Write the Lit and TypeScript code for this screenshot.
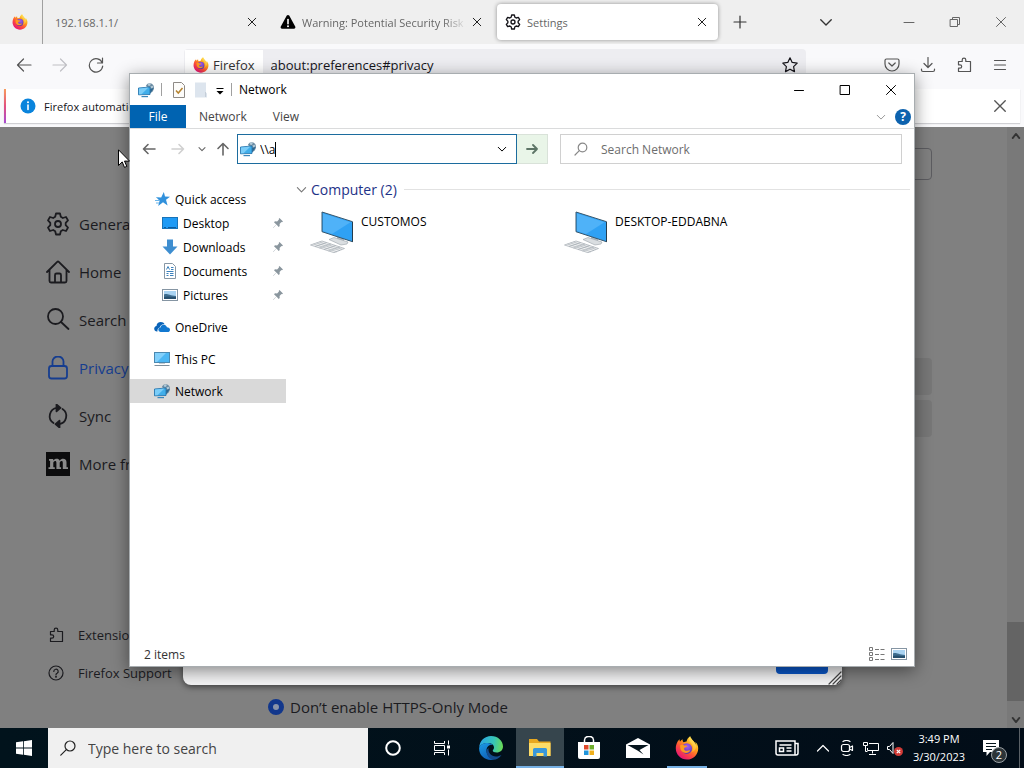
import { LitElement, html, css, nothing, TemplateResult } from 'lit';
import { customElement, property, state } from 'lit/decorators.js';
import { classMap } from 'lit/directives/class-map.js';

interface NavItem {
  label: string;
  icon: TemplateResult;
  active?: boolean;
  pinned?: boolean;
}

/* ---------- shared icons ---------- */

const firefoxIcon = html`
  <svg class="firefox" viewBox="0 0 24 24" aria-hidden="true">
    <defs>
      <linearGradient id="fx-body" x1="0.85" y1="0.05" x2="0.2" y2="0.95">
        <stop offset="0" stop-color="#fff044" />
        <stop offset="0.35" stop-color="#ffa318" />
        <stop offset="0.65" stop-color="#ff4f3a" />
        <stop offset="1" stop-color="#e4107a" />
      </linearGradient>
      <radialGradient id="fx-globe" cx="0.55" cy="0.3" r="0.75">
        <stop offset="0" stop-color="#a45cf0" />
        <stop offset="1" stop-color="#5037a8" />
      </radialGradient>
      <linearGradient id="fx-tail" x1="0.7" y1="0" x2="0.3" y2="1">
        <stop offset="0" stop-color="#fff36b" />
        <stop offset="1" stop-color="#ff9a1c" />
      </linearGradient>
    </defs>
    <path fill="url(#fx-body)" d="M22.6 9.2c-.5-1.300-1.600-2.700-2.400-3.100.7 1.300 1 2.600 1.200 3.500-1.300-3.300-3.600-4.600-5.500-7.500-.6-.9-.7-1.500-.7-1.900-2.300 1.400-3.400 3.600-3.600 5.300-1.100.1-2 .4-2.900.8-.9-.6-1.200-1.700-1.100-3-1 .5-1.900 1.400-2.500 2.200-.5-.4-.5-1.500-.4-2.300C3.200 4.200.8 7.600.8 12.400.8 18.500 5.900 23.500 12 23.500s11.200-4.900 11.200-11.100c0-1.100-.2-2.300-.6-3.200z" />
    <circle cx="11.800" cy="12.600" r="5.300" fill="url(#fx-globe)" />
    <path fill="#ff9a1f" d="M5.200 9.200c1.300-.8 3.100-.6 4.200.2 1.300 0 2.600.1 2.900.6-.2.800-1.400 1.300-2.300 1.600-.8.300-1 1-.8 1.700.3 1.200 1.500 1.700 2.900 1.500 1.400-.2 2.200-.9 3.100-.5-.7 1.700-2.500 2.600-4.200 2.600-3.700 0-6.200-2.600-5.800-7.700z" />
    <path fill="url(#fx-tail)" d="M15.200.2c-1.700 1.600-2 4 .3 6.300 2.200 2.200 3 4.600 2.100 7.200-.4 1.300-1.300 2.400-2.200 3 3.300-.6 5.600-3.300 5.900-6.400-1.200-3.800-3.500-5.200-5.400-8.200-.6-.9-.7-1.500-.7-1.900z" />
  </svg>
`;

const gearIcon = html`
  <svg viewBox="0 0 24 24" class="line gear" aria-hidden="true">
    <circle cx="12" cy="12" r="3" />
    <path d="M10 1.500h4l.8 3.300 2 1.200 3.200-1 2 3.400-2.300 2.400v2.400l2.300 2.400-2 3.400-3.200-1-2 1.200-.8 3.300h-4l-.8-3.300-2-1.200-3.200 1-2-3.400 2.300-2.400v-2.400L2 8.400 4 5l3.200 1 2-1.200z" />
  </svg>
`;

const closeIcon = html`
  <svg viewBox="0 0 12 12" class="line" aria-hidden="true"><path d="M1.500 1.500l9 9M10.500 1.500l-9 9" /></svg>
`;

const puzzleIcon = html`
  <svg viewBox="0 0 16 16" class="line" aria-hidden="true">
    <path d="M2.500 4.500h3.700V3a1.800 1.800 0 0 1 3.600 0v1.500h4.700v10h-12v-3.300H4a1.700 1.700 0 0 0 0-3.400H2.500z" />
  </svg>
`;

const networkIcon = html`
  <svg viewBox="0 0 16 16" aria-hidden="true">
    <path d="M8 3.500a4.200 4.200 0 0 1 7.500 0c.8 2 .5 4.500-.8 6l-2.700 2z" fill="#6b8ca3" />
    <path d="M9.500 2.500l2.300-1.300 1 1.500-1.800 1.500zM12.500 4.500l2.300-.8.300 1.800-2 1z" fill="#b4cbd9" />
    <path d="M15.800 6l-3.600 5.500V7z" fill="#2d668f" />
    <path d="M.5 6l11.500-1v7.500L.5 12.800z" fill="#41aeea" stroke="#1f6fa8" stroke-width=".8" />
    <path d="M1 6.400l9.500-.8-7 6.700H1z" fill="#7bcdf8" />
    <path d="M3.500 14h6.500v1.200H3.500z" fill="#3a87bb" />
  </svg>
`;

const pictureIcon = html`
  <svg viewBox="0 0 16 16" aria-hidden="true">
    <rect x=".5" y="2.500" width="15" height="11" fill="#fff" stroke="#8595a3" />
    <rect x="2" y="4" width="12" height="8" fill="#a9d3f2" />
    <path d="M2 7.500c3-1.500 5 1 12 1.500v3H2z" fill="#3e6d8f" />
    <path d="M2 10c4-1.500 7 .5 12 0v2H2z" fill="#27506f" />
  </svg>
`;

const chevronDown = html`
  <svg viewBox="0 0 12 12" class="line" aria-hidden="true"><path d="M1.500 4l4.500 4.500L10.500 4" /></svg>
`;

const base = css`
  * {
    box-sizing: border-box;
  }

  button {
    display: flex;
    align-items: center;
    justify-content: center;
    flex: none;
    margin: 0;
    padding: 0;
    border: 0;
    background: none;
    color: inherit;
    font: inherit;
  }

  input {
    min-width: 0;
    margin: 0;
    padding: 0;
    border: 0;
    outline: 0;
    background: none;
    color: inherit;
    font: inherit;
  }

  a {
    color: inherit;
    text-decoration: none;
  }

  svg {
    display: block;
    flex: none;
    width: 16px;
    height: 16px;
  }

  .line {
    fill: none;
    stroke: currentColor;
    stroke-width: 1.2;
    stroke-linejoin: round;
    stroke-linecap: round;
  }
`;

/* ---------- browser ---------- */

const warningIcon = html`
  <svg viewBox="0 0 16 16" aria-hidden="true">
    <path d="M6.800 1.600a1.400 1.400 0 0 1 2.400 0l6 11a1.400 1.400 0 0 1-1.200 2.100H2a1.400 1.400 0 0 1-1.200-2.100z" fill="#000" />
    <path d="M8 5.500v4.200" stroke="#fff" stroke-width="1.600" stroke-linecap="round" />
    <circle cx="8" cy="12.200" r="1" fill="#fff" />
  </svg>
`;

const homeIcon = html`
  <svg viewBox="0 0 24 24" class="line" aria-hidden="true">
    <path d="M1 12L11.200 1.800a1.200 1.200 0 0 1 1.600 0L23 12M3.500 10v11a1.500 1.500 0 0 0 1.500 1.500h14a1.500 1.500 0 0 0 1.500-1.500V10M9 22v-7a1.500 1.500 0 0 1 1.500-1.500h3A1.500 1.500 0 0 1 15 15v7" />
  </svg>
`;

const searchIcon = html`
  <svg viewBox="0 0 24 24" class="line" aria-hidden="true">
    <circle cx="9.500" cy="8.500" r="7.500" /><path d="M15 14l7.500 7" />
  </svg>
`;

const lockIcon = html`
  <svg viewBox="0 0 24 24" class="line" aria-hidden="true">
    <rect x="3" y="10" width="18" height="12.500" rx="2.500" />
    <path d="M6.500 10V5.500a5.500 5 0 0 1 11 0V10" />
  </svg>
`;

const syncIcon = html`
  <svg viewBox="0 0 24 24" class="line" aria-hidden="true">
    <path d="M7.500 19A8.300 8.300 0 0 1 11 3.800M16.500 5A8.300 8.300 0 0 1 13 20.200" />
    <path d="M10.500.5v6.800l4-3.400zM13.500 23.500v-6.800l-4 3.400z" fill="currentColor" />
  </svg>
`;

const moreIcon = html`
  <svg viewBox="0 0 24 24" aria-hidden="true">
    <rect width="24" height="24" fill="#0c0c0d" />
    <path d="M3 7h4.200v1.500C8.300 7.200 9.300 6.700 10.700 6.700c1.400 0 2.500.6 3 2 .9-1.400 2-2 3.500-2 2.200 0 3.300 1.400 3.300 3.600v5h1.500V17h-5.200v-6c0-1.300-.4-1.900-1.300-1.900-1.100 0-1.800.9-1.800 2.300v3.900h1.400V17h-4.700v-6c0-1.300-.4-1.900-1.300-1.900-1.100 0-1.800.9-1.800 2.300v3.900h1.500V17H2.500v-1.700h1.600V8.700H3z" fill="#8a8a8a" />
  </svg>
`;

const helpIcon = html`
  <svg viewBox="0 0 16 16" class="line" aria-hidden="true">
    <circle cx="8" cy="8" r="7" />
    <path d="M5.800 6.400a2.200 2.200 0 1 1 3.300 1.900c-.8.400-1.100.8-1.100 1.500" />
    <circle cx="8" cy="11.800" r=".4" fill="currentColor" />
  </svg>
`;

@customElement('browser-window')
export class BrowserWindow extends LitElement {
  static styles = [
    base,
    css`
      :host {
        display: flex;
        flex-direction: column;
        flex: 1;
        min-height: 0;
        position: relative;
        overflow: hidden;
        color: #15141a;
      }

      .tabs {
        display: flex;
        align-items: center;
        height: 44px;
        background: #efefef;
        color: #333;
        font-size: 11px;
      }

      .pinned {
        width: 43px;
        height: 44px;
        margin-right: 4px;
        padding-right: 2px;
        border-right: 1px solid #a0a0a0;
      }

      .tab {
        display: flex;
        align-items: center;
        gap: 6px;
        width: 221px;
        height: 36px;
        margin-right: 4px;
        padding: 0 6px 0 8px;
        border-radius: 4px;
        color: #666;
      }

      .tab svg.gear {
        color: #15141a;
        stroke-width: 2;
      }

      .tab.selected {
        background: #fff;
        box-shadow: 0 0 4px rgba(0, 0, 0, 0.4);
      }

      .tab-title {
        flex: 1;
        overflow: hidden;
        white-space: nowrap;
      }

      .tab-title.fade {
        mask-image: linear-gradient(to left, transparent, #000 24px);
      }

      .tab-close {
        width: 20px;
        height: 20px;
        margin-left: -6px;
        color: #222;
      }

      .tab-close svg {
        width: 10px;
        height: 10px;
      }

      .new-tab {
        width: 36px;
        height: 36px;
      }

      .new-tab svg {
        width: 14px;
        height: 14px;
      }

      .tab-list {
        width: 36px;
        height: 36px;
        margin-left: auto;
        margin-right: 42px;
      }

      .tab-list svg {
        width: 14px;
        height: 14px;
      }

      .caption {
        width: 46px;
        height: 36px;
        color: #666;
      }

      .caption svg {
        width: 12px;
        height: 12px;
      }

      .caption .line {
        stroke-width: 1;
      }

      .toolbar {
        display: flex;
        align-items: center;
        height: 43px;
        padding: 0 6px 2px;
        background: #f9f9fb;
        color: #555;
      }

      .tool {
        width: 36px;
        height: 36px;
      }

      .tool[disabled] {
        color: #c0c0c4;
      }

      .urlbar {
        display: flex;
        align-items: center;
        flex: 1;
        height: 32px;
        margin: 0 68px 0 70px;
        padding: 1px;
        border-radius: 4px;
        background: #ededf1;
        color: #15141a;
        font-size: 13px;
      }

      .identity {
        display: flex;
        align-items: center;
        gap: 4px;
        height: 30px;
        padding: 0 8px;
        background: #fff;
        color: #333;
      }

      .urlbar input {
        flex: 1;
        padding-left: 8px;
      }

      .urlbar button {
        width: 30px;
        height: 30px;
      }

      .notice {
        display: flex;
        align-items: center;
        height: 40px;
        padding: 2px 4px 4px;
        background: #f9f9fb;
        font-size: 11px;
      }

      .notice-body {
        display: flex;
        align-items: center;
        gap: 8px;
        flex: 1;
        height: 34px;
        padding: 0 8px 0 14px;
        border-style: solid;
        border-width: 0 0 0 2px;
        border-image: linear-gradient(#f9a05a, #e2517f, #a34bd8) 1;
        background: #fff;
        box-shadow: 0 1px 1px #d0d0d4;
      }

      .notice-text {
        flex: 1;
        overflow: hidden;
        white-space: nowrap;
      }

      .notice button {
        width: 24px;
        height: 24px;
        color: #555;
      }

      .notice button svg {
        width: 14px;
        height: 14px;
      }

      .page {
        display: flex;
        flex: 1;
        min-height: 0;
        background: #808080;
      }

      .categories {
        display: flex;
        flex-direction: column;
        width: 248px;
        padding: 73px 0 36px 46px;
        font-size: 15px;
        white-space: nowrap;
      }

      .category {
        display: flex;
        align-items: center;
        gap: 9px;
        height: 48px;
        color: #1b1b1f;
      }

      .category.active {
        color: #163d8f;
      }

      .category svg {
        width: 24px;
        height: 24px;
      }

      .category .line {
        stroke-width: 1.8;
      }

      .spacer {
        flex: 1;
      }

      .small {
        gap: 14px;
        height: 38px;
        padding-left: 2px;
        font-size: 13px;
      }

      .small svg {
        width: 16px;
        height: 16px;
      }

      .small .line {
        stroke-width: 1.2;
      }

      .prefs {
        display: flex;
        flex-direction: column;
        flex: 1;
        max-width: 684px;
        padding: 21px 0 10px 20px;
      }

      .find {
        width: 280px;
        height: 32px;
        margin-left: auto;
        margin-bottom: 178px;
        border: 1px solid #5c5c60;
        border-radius: 4px;
      }

      .pref-button {
        width: 150px;
        height: 37px;
        margin: 0 0 5px auto;
        border-radius: 4px;
        background: #777;
        color: #1b1b1f;
        font-size: 13px;
      }

      .radio-row {
        display: flex;
        align-items: center;
        gap: 6px;
        margin-top: auto;
        font-size: 15px;
        line-height: 22px;
        color: #1b1b1f;
      }

      .radio-row input {
        appearance: none;
        width: 16px;
        height: 16px;
        border: 5px solid #12378c;
        border-radius: 50%;
        background: #8a93a8;
      }

      .scrollbar {
        display: flex;
        flex-direction: column;
        align-items: center;
        width: 17px;
        margin-left: auto;
        padding: 4px 0 3px;
        background: #797979;
        color: #333;
      }

      .scrollbar svg {
        width: 10px;
        height: 10px;
      }

      .scrollbar .line {
        stroke-width: 2.2;
      }

      .thumb {
        width: 17px;
        height: 79px;
        margin: auto 0 14px;
        background: #646464;
      }

      /* sub-dialog floating over the dimmed page */
      .dialog {
        position: absolute;
        left: 183px;
        bottom: 43px;
        display: flex;
        align-items: flex-end;
        width: 659px;
        height: 400px;
        border-radius: 8px;
        background: #f4f4f5;
        box-shadow: 0 2px 6px rgba(0, 0, 0, 0.5);
      }

      .save {
        width: 52px;
        height: 32px;
        margin: 0 0 11px auto;
        border-radius: 4px;
        background: #0a57c9;
        color: #fff;
        font-size: 13px;
      }

      .grip {
        width: 14px;
        height: 14px;
        color: #444;
      }
    `,
  ];

  @property({ type: String })
  url = 'about:preferences#privacy';

  private categories: NavItem[] = [
    { label: 'General', icon: gearIcon },
    { label: 'Home', icon: homeIcon },
    { label: 'Search', icon: searchIcon },
    { label: 'Privacy & Security', icon: lockIcon, active: true },
    { label: 'Sync', icon: syncIcon },
    { label: 'More from Mozilla', icon: moreIcon },
  ];

  private renderTabs() {
    return html`
      <div class="tabs">
        <button class="pinned" aria-label="Firefox">${firefoxIcon}</button>
        <div class="tab">
          <span class="tab-title">192.168.1.1/</span>
          <button class="tab-close" aria-label="Close tab">${closeIcon}</button>
        </div>
        <div class="tab">
          ${warningIcon}
          <span class="tab-title fade">Warning: Potential Security Risk Ahead</span>
          <button class="tab-close" aria-label="Close tab">${closeIcon}</button>
        </div>
        <div class="tab selected">
          ${gearIcon}
          <span class="tab-title">Settings</span>
          <button class="tab-close" aria-label="Close tab">${closeIcon}</button>
        </div>
        <button class="new-tab" aria-label="New tab">
          <svg viewBox="0 0 14 14" class="line"><path d="M7 1v12M1 7h12" /></svg>
        </button>
        <button class="tab-list" aria-label="List all tabs">${chevronDown}</button>
        <button class="caption" aria-label="Minimize">
          <svg viewBox="0 0 12 12" class="line"><path d="M1 6.500h10" /></svg>
        </button>
        <button class="caption" aria-label="Restore">
          <svg viewBox="0 0 12 12" class="line"><path d="M1.500 3.500h7v7h-7zM3.500 3.500v-2h7v7h-2" /></svg>
        </button>
        <button class="caption" aria-label="Close">${closeIcon}</button>
      </div>
    `;
  }

  private renderToolbar() {
    return html`
      <div class="toolbar">
        <button class="tool" aria-label="Back">
          <svg viewBox="0 0 16 16" class="line"><path d="M15 8H1.500M7.500 2l-6 6 6 6" /></svg>
        </button>
        <button class="tool" aria-label="Forward" disabled>
          <svg viewBox="0 0 16 16" class="line"><path d="M1 8h13.500M8.500 2l6 6-6 6" /></svg>
        </button>
        <button class="tool" aria-label="Reload">
          <svg viewBox="0 0 16 16" class="line"><path d="M14.500 1v5h-5M14.300 6A6.700 6.700 0 1 0 14.700 9" /></svg>
        </button>
        <div class="urlbar">
          <span class="identity">${firefoxIcon} Firefox</span>
          <input type="text" aria-label="Address" .value=${this.url} />
          <button aria-label="Bookmark this page">
            <svg viewBox="0 0 16 16" class="line">
              <path d="M8 .8l2.200 4.600 5 .7-3.600 3.500.9 5L8 12.200l-4.500 2.400.9-5L.8 6.100l5-.7z" />
            </svg>
          </button>
        </div>
        <button class="tool" aria-label="Save to Pocket">
          <svg viewBox="0 0 16 16" class="line">
            <path d="M2.500 2h11A1.500 1.500 0 0 1 15 3.500V7A7 7 0 0 1 1 7V3.500A1.500 1.500 0 0 1 2.500 2zM4.800 6L8 9l3.200-3" />
          </svg>
        </button>
        <button class="tool" aria-label="Downloads">
          <svg viewBox="0 0 16 16" class="line">
            <path d="M8 .5v10M4 6.500l4 4 4-4M1.500 12v1A1.500 1.500 0 0 0 3 14.500h10a1.500 1.500 0 0 0 1.500-1.500v-1" />
          </svg>
        </button>
        <button class="tool" aria-label="Extensions">${puzzleIcon}</button>
        <button class="tool" aria-label="Menu">
          <svg viewBox="0 0 16 16" class="line"><path d="M2.500 3.500h11M2.500 8h11M2.500 12.500h11" /></svg>
        </button>
      </div>
      <div class="notice">
        <div class="notice-body">
          <svg viewBox="0 0 16 16" aria-hidden="true">
            <circle cx="8" cy="8" r="7.500" fill="#0a84dc" />
            <path d="M8 7v4.500" stroke="#fff" stroke-width="1.600" stroke-linecap="round" />
            <circle cx="8" cy="4.300" r="1" fill="#fff" />
          </svg>
          <span class="notice-text">Firefox automatically sends some data to Mozilla so that we can improve your experience.</span>
          <button aria-label="Dismiss">${closeIcon}</button>
        </div>
      </div>
    `;
  }

  render() {
    return html`
      ${this.renderTabs()} ${this.renderToolbar()}
      <div class="page">
        <nav class="categories">
          ${this.categories.map(
            (item) => html`
              <a class=${classMap({ category: true, active: !!item.active })} href="#">${item.icon}${item.label}</a>
            `
          )}
          <span class="spacer"></span>
          <a class="category small" href="#">${puzzleIcon}Extensions & Themes</a>
          <a class="category small" href="#">${helpIcon}Firefox Support</a>
        </nav>
        <div class="prefs">
          <input class="find" type="text" aria-label="Find in Settings" />
          <button class="pref-button">View Certificates</button>
          <button class="pref-button">Security Devices</button>
          <label class="radio-row">
            <input type="radio" name="https-only" checked />
            Don’t enable HTTPS-Only Mode
          </label>
        </div>
        <div class="scrollbar">
          <svg viewBox="0 0 12 12" class="line"><path d="M2 8.500l4-5 4 5" /></svg>
          <div class="thumb"></div>
          <svg viewBox="0 0 12 12" class="line"><path d="M2 3.500l4 5 4-5" /></svg>
        </div>
      </div>
      <div class="dialog">
        <button class="save">OK</button>
        <svg class="grip line" viewBox="0 0 14 14"><path d="M1 13L13 1M5 13l8-8M9 13l4-4" /></svg>
      </div>
    `;
  }
}

/* ---------- explorer ---------- */

const starIcon = html`
  <svg viewBox="0 0 16 16" aria-hidden="true">
    <path d="M9.800 1l1.200 4.500 5 .2-4 3 1.600 5.800-4.600-3.200L4.200 15l1.400-5.300-3.400-3.500 5 .3z" fill="#3191dc" />
    <path d="M1 9.500h4M2 12h3M2.500 6.500h2" stroke="#6cb6ea" />
  </svg>
`;

const desktopIcon = html`
  <svg viewBox="0 0 16 16" aria-hidden="true">
    <rect x=".5" y="2.500" width="15" height="11" fill="#1e9af5" stroke="#1873b8" />
    <path d="M2 12.500h2M6 12.500h8" stroke="#0b5b9e" />
  </svg>
`;

const downloadIcon = html`
  <svg viewBox="0 0 16 16" aria-hidden="true">
    <path d="M5 .5h6v7h4.500L8 15.500.5 7.500H5z" fill="#3e8ed0" />
  </svg>
`;

const documentIcon = html`
  <svg viewBox="0 0 16 16" aria-hidden="true">
    <path d="M2.500.5h8l3 3v12h-11z" fill="#fff" stroke="#8797a5" />
    <path d="M4.500 6.500l1.500-3 1.500 3M9 4.500h2.500M9 6.500h2.500M4.500 8.500h7M4.500 10.500h2M8 10.500h3.500M4.500 12.500h2M8 12.500h3.500" fill="none" stroke="#3c82bd" />
  </svg>
`;

const oneDriveIcon = html`
  <svg viewBox="0 0 16 16" aria-hidden="true">
    <path d="M3.500 12.500A3 3 0 0 1 .2 9.800c0-1.500 1-2.500 2.300-2.800.1-2.600 2-4 4.300-4 1.800 0 3.100.8 3.800 2.200-2.600-.4-4.500 1-4.800 3.200-1.800.4-2.700 2.200-2.300 4.100z" fill="#0a63b8" />
    <path d="M6.500 13A2.300 2.300 0 0 1 4.300 10.800c0-1.300.8-2.200 2.200-2.400.2-1.700 1.500-2.700 3.200-2.700 1.600 0 2.800.9 3.200 2.500 1.800 0 3.100 1 3.100 2.500 0 1.400-1 2.300-2.400 2.300z" fill="#1278d0" />
  </svg>
`;

const pcIcon = html`
  <svg viewBox="0 0 16 16" aria-hidden="true">
    <rect x=".5" y="1.500" width="15" height="10" fill="#4cb7f4" stroke="#4a88b0" />
    <path d="M1 2h11L3 11H1z" fill="#82d0fb" />
    <path d="M.5 14.500h15" stroke="#7f8f9b" />
    <path d="M5 12.500h6" stroke="#c3ccd2" />
  </svg>
`;

const pinIcon = html`
  <svg class="pin" viewBox="0 0 12 12" aria-hidden="true">
    <path d="M7.500 1L11 4.500l-1 .7-.6-.2-1.800 1.900.1 2-1 1-2.200-2.300L1.500 10.800 1 11l.3-.6 3-3L2 5.200l1-1 2.100.2L7 2.600l-.3-.7z" fill="#8a969e" />
  </svg>
`;

const computerIcon = html`
  <svg class="computer" viewBox="0 0 48 48" aria-hidden="true">
    <path d="M27 25l7 2v4l-7-2z" fill="#b4bcc1" />
    <path d="M19 29.500l5-2 14 4.500-1 2-6 1z" fill="#dadee1" stroke="#98a1a8" stroke-width=".6" />
    <path d="M12 2l30.500 9.700v20L12 21.700z" fill="#2fa1f4" stroke="#37566c" />
    <path d="M13 3.500l27.500 8.700L22 24l-9-3z" fill="#4fb2f8" />
    <path d="M42 12h1v20l-1-.5z" fill="#253c4c" />
    <path d="M.5 35L12 31l22.500 7.500L24 42.700z" fill="#f0f1f2" stroke="#a3abb1" stroke-width=".7" />
    <path d="M3.500 34l23.500 7.800M6.500 33l23.500 7.500M9.500 32l22.500 7.300M5 36.500l11.500-4M9.500 38l11.500-4M14 39.500l11.500-4M18.500 41l11.500-4" stroke="#9fa8ae" stroke-width=".6" fill="none" />
  </svg>
`;

@customElement('explorer-window')
export class ExplorerWindow extends LitElement {
  static styles = [
    base,
    css`
      :host {
        display: flex;
        flex-direction: column;
        border: 1px solid #a8adb0;
        background: #fff;
        box-shadow: 0 4px 16px rgba(0, 0, 0, 0.45);
        color: #000;
        font-size: 12px;
      }

      .title-bar {
        display: flex;
        align-items: center;
        height: 31px;
        padding-left: 8px;
      }

      .title-bar > svg {
        margin-right: 7px;
      }

      .divider {
        width: 1px;
        height: 13px;
        background: #a0a0a0;
      }

      .quick {
        width: 22px;
        height: 22px;
      }

      .quick:first-of-type {
        margin-left: 6px;
      }

      .quick.arrow {
        width: 16px;
        margin-right: 3px;
      }

      .window-title {
        flex: 1;
        padding-left: 7px;
      }

      .caption {
        width: 46px;
        height: 30px;
      }

      .caption svg {
        width: 12px;
        height: 12px;
      }

      .caption .line {
        stroke-width: 1;
      }

      .ribbon {
        display: flex;
        align-items: center;
        height: 24px;
        border-bottom: 1px solid #dadbdc;
        color: #444;
      }

      .ribbon-tab {
        height: 23px;
        padding: 0 13px;
      }

      .ribbon-tab.file {
        width: 56px;
        background: #0063b1;
        color: #fff;
      }

      .expand {
        margin-left: auto;
        margin-right: 9px;
        color: #999;
      }

      .expand svg {
        width: 10px;
        height: 10px;
      }

      .help {
        width: 16px;
        height: 16px;
        margin-right: 3px;
        border-radius: 50%;
        background: #0d62ae;
        color: #fff;
        font-size: 12px;
        font-weight: 700;
      }

      .address-row {
        display: flex;
        align-items: center;
        height: 40px;
        padding: 0 12px 0 7px;
        color: #666;
      }

      .nav-button {
        width: 24px;
        height: 24px;
        margin-right: 5px;
      }

      .nav-button.narrow {
        width: 14px;
      }

      .nav-button.narrow,
      .nav-button.up {
        margin-right: 2px;
      }

      .nav-button svg {
        width: 14px;
        height: 14px;
      }

      .nav-button.narrow svg {
        width: 8px;
        height: 8px;
      }

      .nav-button .line {
        stroke-width: 1.6;
      }

      .nav-button[disabled] {
        color: #d0d0d0;
      }

      .address {
        display: flex;
        align-items: center;
        flex: 1;
        height: 30px;
        padding: 0 8px 0 2px;
        border: 1px solid #1c6c9e;
        color: #000;
      }

      .address input {
        field-sizing: content;
        margin-left: 4px;
      }

      .caret {
        width: 1px;
        height: 15px;
        background: #000;
      }

      .address button {
        width: 12px;
        margin-left: auto;
      }

      .address button svg {
        width: 10px;
        height: 10px;
      }

      .go {
        width: 31px;
        height: 30px;
        margin-right: 12px;
        border: 1px solid #d9e2d9;
        border-left: 0;
        background: #e9f5e8;
        color: #5d7466;
      }

      .go svg {
        width: 12px;
        height: 12px;
      }

      .go .line {
        stroke-width: 1.8;
      }

      .search {
        display: flex;
        align-items: center;
        gap: 13px;
        width: 342px;
        height: 30px;
        padding: 0 13px;
        border: 1px solid #d0d0d0;
        color: #888;
      }

      .search svg {
        width: 14px;
        height: 14px;
      }

      .search input {
        flex: 1;
      }

      .search input::placeholder {
        color: #6d6d6d;
        opacity: 1;
      }

      .body {
        display: flex;
        flex: 1;
        min-height: 0;
      }

      .tree {
        display: flex;
        flex-direction: column;
        gap: 8px;
        width: 156px;
        margin-right: 10px;
        padding-top: 18px;
      }

      .tree-item {
        display: flex;
        align-items: center;
        gap: 5px;
        height: 24px;
        padding: 0 2px 0 24px;
      }

      .tree-item.pinned {
        padding-left: 32px;
      }

      .tree-item.active {
        background: #d9d9d9;
      }

      .pin {
        width: 12px;
        height: 12px;
        margin-left: auto;
      }

      .files {
        flex: 1;
        padding: 10px 4px 0 0;
      }

      .group {
        display: flex;
        align-items: center;
        gap: 4px;
        height: 20px;
        color: #1e3287;
        font-size: 14px;
      }

      .group svg {
        width: 11px;
        height: 11px;
        color: #777;
      }

      .group::after {
        content: '';
        flex: 1;
        height: 1px;
        margin-left: 3px;
        background: #e2e2e2;
      }

      .tiles {
        display: grid;
        grid-template-columns: repeat(2, 254px);
        padding: 11px 0 0 14px;
      }

      .tile {
        display: flex;
        gap: 3px;
        line-height: 24px;
      }

      .computer {
        width: 48px;
        height: 48px;
      }

      .status {
        display: flex;
        align-items: center;
        gap: 6px;
        height: 24px;
        padding: 0 7px 0 14px;
        color: #333;
      }

      .status span {
        flex: 1;
      }
    `,
  ];

  @property({ type: String })
  title = 'Network';

  @state()
  private path = '\\\\a';

  private tree: NavItem[][] = [
    [
      { label: 'Quick access', icon: starIcon },
      { label: 'Desktop', icon: desktopIcon, pinned: true },
      { label: 'Downloads', icon: downloadIcon, pinned: true },
      { label: 'Documents', icon: documentIcon, pinned: true },
      { label: 'Pictures', icon: pictureIcon, pinned: true },
    ],
    [{ label: 'OneDrive', icon: oneDriveIcon }],
    [{ label: 'This PC', icon: pcIcon }],
    [{ label: 'Network', icon: networkIcon, active: true }],
  ];

  private computers = ['CUSTOMOS', 'DESKTOP-EDDABNA'];

  render() {
    return html`
      <div class="title-bar">
        ${networkIcon}
        <span class="divider"></span>
        <button class="quick" aria-label="Properties">
          <svg viewBox="0 0 16 16">
            <path d="M2.500.5h8l3 3v12h-11z" fill="#fdfcfa" stroke="#8e8a86" />
            <path d="M5 8.500l2.300 2.500L11.500 6" fill="none" stroke="#b5832f" stroke-width="1.500" />
          </svg>
        </button>
        <button class="quick" aria-label="New folder">
          <svg viewBox="0 0 16 16">
            <path d="M2 .5h11v10l1 1v4H2z" fill="#dde5ee" />
            <path d="M12.500 10v5" stroke="#c5ced8" />
          </svg>
        </button>
        <button class="quick arrow" aria-label="Customize Quick Access Toolbar">
          <svg viewBox="0 0 16 16"><path d="M4.500 6.500h7" stroke="#000" /><path d="M4.500 9h7L8 12.500z" /></svg>
        </button>
        <span class="divider"></span>
        <span class="window-title">${this.title}</span>
        <button class="caption" aria-label="Minimize">
          <svg viewBox="0 0 12 12" class="line"><path d="M1.500 6.500h9" /></svg>
        </button>
        <button class="caption" aria-label="Maximize">
          <svg viewBox="0 0 12 12" class="line"><path d="M1.500 1.500h9v9h-9z" /></svg>
        </button>
        <button class="caption" aria-label="Close">${closeIcon}</button>
      </div>
      <div class="ribbon">
        <button class="ribbon-tab file">File</button>
        <button class="ribbon-tab">Network</button>
        <button class="ribbon-tab">View</button>
        <button class="expand" aria-label="Expand the Ribbon">${chevronDown}</button>
        <button class="help" aria-label="Help">?</button>
      </div>
      <div class="address-row">
        <button class="nav-button" aria-label="Back">
          <svg viewBox="0 0 14 14" class="line"><path d="M13 7H1.500M6 2.500L1.500 7 6 11.500" /></svg>
        </button>
        <button class="nav-button" aria-label="Forward" disabled>
          <svg viewBox="0 0 14 14" class="line"><path d="M1 7h11.500M8 2.500L12.500 7 8 11.500" /></svg>
        </button>
        <button class="nav-button narrow" aria-label="Recent locations">${chevronDown}</button>
        <button class="nav-button up" aria-label="Up">
          <svg viewBox="0 0 14 14" class="line"><path d="M7 13V1.500M2 6.500l5-5 5 5" /></svg>
        </button>
        <div class="address">
          ${networkIcon}
          <input type="text" aria-label="Address" .value=${this.path} />
          <span class="caret"></span>
          <button aria-label="Previous locations">${chevronDown}</button>
        </div>
        <button class="go" aria-label="Go">
          <svg viewBox="0 0 12 12" class="line"><path d="M1 6h10M7 2l4 4-4 4" /></svg>
        </button>
        <div class="search">
          <svg viewBox="0 0 14 14" class="line"><circle cx="8.500" cy="5.500" r="4.300" /><path d="M5.300 8.700L1 13" /></svg>
          <input type="search" aria-label="Search Network" placeholder="Search Network" />
        </div>
      </div>
      <div class="body">
        <nav class="tree">
          ${this.tree.map(
            (group) => html`
              <div>
                ${group.map(
                  (item) => html`
                    <a
                      class=${classMap({ 'tree-item': true, pinned: !!item.pinned, active: !!item.active })}
                      href="#"
                    >${item.icon}${item.label}${item.pinned ? pinIcon : nothing}</a>
                  `
                )}
              </div>
            `
          )}
        </nav>
        <section class="files">
          <div class="group">${chevronDown}Computer (${this.computers.length})</div>
          <div class="tiles">
            ${this.computers.map((name) => html`<div class="tile">${computerIcon}<span>${name}</span></div>`)}
          </div>
        </section>
      </div>
      <div class="status">
        <span>${this.computers.length} items</span>
        <svg viewBox="0 0 16 16" fill="none" stroke="#777">
          <path d="M.5 1.500h3v3h-3zM.5 6.500h3v3h-3zM.5 11.500h3v3h-3zM6 3.500h4M11.500 3.500h4M6 8.500h4M11.500 8.500h4M6 13.500h4M11.500 13.500h4" />
        </svg>
        ${pictureIcon}
      </div>
    `;
  }
}

/* ---------- taskbar ---------- */

const edgeIcon = html`
  <svg viewBox="0 0 24 24" aria-hidden="true">
    <defs>
      <linearGradient id="edge-top" x1="0" y1="0.4" x2="1" y2="0.5">
        <stop offset="0" stop-color="#2aa4e6" />
        <stop offset="0.6" stop-color="#36c5b8" />
        <stop offset="1" stop-color="#6bdc55" />
      </linearGradient>
      <linearGradient id="edge-side" x1="0" y1="0" x2="0.5" y2="1">
        <stop offset="0" stop-color="#1c9be6" />
        <stop offset="1" stop-color="#0f62b8" />
      </linearGradient>
    </defs>
    <path d="M.2 11.500C.5 5 5.500 0 12 0c7 0 12 5 12 10.500 0 3.700-2.900 6-6.300 6-2.600 0-4-.9-4-1.700 0-.7 1.300-1.200 1.300-3.200C15 9 12.600 7 9 7 4.500 7 1.200 9 .2 11.500z" fill="url(#edge-top)" />
    <path d="M.1 12C1 8.800 4.400 7 8.600 7c2.200 0 4 .7 5.200 1.900-3.600-.8-6.300 2-6.300 5.600 0 4.500 3.500 8 7.500 9-1 .3-2 .5-3 .5C5 24-.2 18.500.1 12z" fill="url(#edge-side)" />
    <path d="M9.600 12c-.9 4.500 2.700 8.400 7.400 8.400 2 0 4-.6 5.500-1.500-1.900 3-5 4.800-8 4.900C10 23.300 7.500 19 7.500 15.500c0-1.500.8-2.800 2.100-3.500z" fill="#134b8c" />
  </svg>
`;

const folderIcon = html`
  <svg viewBox="0 0 24 24" aria-hidden="true">
    <path d="M1 3h8l2 2.500h11.500V20H1z" fill="#e8a820" />
    <path d="M1 7h21.500v13H1z" fill="#fddc68" />
    <path d="M5 20.500v-7A1.500 1.500 0 0 1 6.500 12h11a1.500 1.500 0 0 1 1.500 1.500v7h-3.500V17h-7v3.500z" fill="#3a97d9" />
  </svg>
`;

const storeIcon = html`
  <svg viewBox="0 0 24 24" aria-hidden="true">
    <path d="M7.500 6V4a4 4 0 0 1 4-3.500h1a4 4 0 0 1 4 3.500v2" fill="none" stroke="#fff" stroke-width="1.500" />
    <path d="M1 6h22v15a2 2 0 0 1-2 2H3a2 2 0 0 1-2-2z" fill="#fff" />
    <path d="M7 9h4.500v4.500H7z" fill="#e0492b" />
    <path d="M12.500 9H17v4.500h-4.500z" fill="#6fae2c" />
    <path d="M7 14.500h4.500V19H7z" fill="#2195dc" />
    <path d="M12.500 14.500H17V19h-4.500z" fill="#f0b01c" />
  </svg>
`;

const mailIcon = html`
  <svg viewBox="0 0 24 24" aria-hidden="true">
    <path d="M0 8.500L12 2l12 6.500V22H0z" fill="#fff" />
    <path d="M1.500 9h21L13.500 14l4 4.500-6-4z" fill="#06151d" />
  </svg>
`;

@customElement('task-bar')
export class TaskBar extends LitElement {
  static styles = [
    base,
    css`
      :host {
        display: flex;
        align-items: center;
        height: 40px;
        background: linear-gradient(90deg, #01131c, #020d18);
        color: #fff;
        font-size: 11px;
      }

      .start {
        width: 48px;
        height: 40px;
      }

      .search {
        display: flex;
        align-items: center;
        gap: 12px;
        width: 320px;
        height: 40px;
        padding: 0 12px;
        background: #f0f0f0;
        color: #222;
        font-size: 14px;
      }

      .search input {
        flex: 1;
      }

      .search input::placeholder {
        color: #444;
        opacity: 1;
      }

      .apps {
        display: flex;
        gap: 1px;
        padding-left: 1px;
      }

      .app {
        width: 48px;
        height: 40px;
      }

      .app svg {
        width: 24px;
        height: 24px;
      }

      .app svg.small {
        width: 18px;
        height: 18px;
      }

      .app.running {
        background: linear-gradient(#76b0e4, #76b0e4) bottom / 40px 2px no-repeat;
      }

      .app.active {
        background-size: 100% 2px;
        background-color: #36454d;
      }

      .tray {
        display: flex;
        align-items: center;
        margin-left: auto;
        height: 40px;
      }

      .tray button {
        width: 24px;
        height: 40px;
      }

      .tray .news {
        width: 48px;
      }

      .tray .news svg {
        width: 24px;
        height: 24px;
      }

      .tray .clock {
        flex-direction: column;
        width: 64px;
        line-height: 18px;
      }

      .tray .notifications {
        position: relative;
        width: 40px;
        margin-right: 8px;
      }

      .notifications svg {
        width: 18px;
        height: 18px;
      }

      .badge {
        position: absolute;
        right: 4px;
        bottom: 5px;
        width: 16px;
        height: 16px;
        border: 1px solid #9aa0a4;
        border-radius: 50%;
        background: #2c3438;
        line-height: 14px;
      }

      .show-desktop {
        width: 5px;
        height: 40px;
        border-left: 1px solid #5a6066;
      }
    `,
  ];

  render() {
    return html`
      <button class="start" aria-label="Start">
        <svg viewBox="0 0 16 16" fill="#fff">
          <path d="M0 2.300L7 1.300v6.300H0zM7.800 1.200L16 0v7.600H7.800zM0 8.400h7v6.300l-7-1zM7.800 8.400H16V16l-8.200-1.200z" />
        </svg>
      </button>
      <div class="search">
        <svg viewBox="0 0 16 16" class="line"><circle cx="10" cy="6" r="5" /><path d="M6.300 9.700L.8 15.200" /></svg>
        <input type="search" aria-label="Search" placeholder="Type here to search" />
      </div>
      <div class="apps">
        <button class="app" aria-label="Cortana">
          <svg class="small" viewBox="0 0 18 18"><circle cx="9" cy="9" r="6.800" fill="none" stroke="#fff" stroke-width="2" /></svg>
        </button>
        <button class="app" aria-label="Task View">
          <svg class="small" viewBox="0 0 18 18" fill="none" stroke="#fff">
            <path d="M1.500 2v2.500h10V2M1.500 16v-2.500h10V16M1.500 6.500h10v5h-10zM15.500 1.500v4M15.500 10.500v6" />
            <path d="M14 6.500h3v3h-3z" fill="#fff" stroke="none" />
          </svg>
        </button>
        <button class="app" aria-label="Microsoft Edge">${edgeIcon}</button>
        <button class="app running active" aria-label="File Explorer">${folderIcon}</button>
        <button class="app" aria-label="Microsoft Store">${storeIcon}</button>
        <button class="app" aria-label="Mail">${mailIcon}</button>
        <button class="app running" aria-label="Firefox">${firefoxIcon}</button>
      </div>
      <div class="tray">
        <button class="news" aria-label="News and interests">
          <svg viewBox="0 0 24 24" fill="none" stroke="#fff" stroke-width="1.500">
            <path d="M1 5h19v14H3a2 2 0 0 1-2-2zM20 7.500h3V17a2 2 0 0 1-2 2h-2M4.500 9h12M11.500 12h5M11.500 15h5M4.500 12h4v3.500h-4z" />
          </svg>
        </button>
        <button aria-label="Show hidden icons">
          <svg viewBox="0 0 16 16" class="line"><path d="M2.500 11L8 5.500l5.500 5.500" /></svg>
        </button>
        <button aria-label="Meet Now">
          <svg viewBox="0 0 16 16" class="line">
            <rect x="2.500" y="4.500" width="8" height="7" rx="2" />
            <path d="M10.500 7.500l3-1.500v4.500l-3-1.500M4 1.500a7 7 0 0 1 7 0M4 14.500a7 7 0 0 0 7 0" />
          </svg>
        </button>
        <button aria-label="Network">
          <svg viewBox="0 0 16 16" fill="none" stroke="#fff">
            <path d="M6 3.500h9.500v7h-11V8M9.500 10.500v3M6 14.500h7M.5 2.500h4v3h-4zM2.500 5.500v6h2" />
          </svg>
        </button>
        <button aria-label="Volume muted">
          <svg viewBox="0 0 16 16">
            <path d="M.5 6.500h2l3.500-4v11l-3.500-4h-2z" fill="none" stroke="#fff" />
            <circle cx="11.500" cy="11.500" r="4.500" fill="#d03a36" />
            <path d="M9.800 9.800l3.400 3.400M13.200 9.800l-3.400 3.400" stroke="#fff" stroke-width="1.200" />
          </svg>
        </button>
        <button class="clock">
          <span>3:49 PM</span>
          <span>3/30/2023</span>
        </button>
        <button class="notifications" aria-label="Notifications">
          <svg viewBox="0 0 18 18">
            <path d="M1 1h16v12H8l-3.500 4v-4H1z" fill="#fff" />
            <path d="M4 4.500h10M4 7.500h10M4 10.500h6" stroke="#06151d" />
          </svg>
          <span class="badge">2</span>
        </button>
        <div class="show-desktop"></div>
      </div>
    `;
  }
}

/* ---------- desktop ---------- */

@customElement('app-root')
export class AppRoot extends LitElement {
  static styles = css`
    :host {
      display: flex;
      flex-direction: column;
      position: relative;
      height: 100vh;
      overflow: hidden;
      font-family: 'Open Sans', 'Noto Sans', sans-serif;
    }

    explorer-window {
      position: absolute;
      left: 129px;
      top: 73px;
      width: 786px;
      height: 594px;
      box-sizing: border-box;
    }

    .cursor {
      position: absolute;
      left: 118px;
      top: 149px;
      width: 12px;
      height: 19px;
    }
  `;

  render() {
    return html`
      <browser-window></browser-window>
      <explorer-window></explorer-window>
      <task-bar></task-bar>
      <svg class="cursor" viewBox="0 0 12 19" aria-hidden="true">
        <path d="M.5.8v15.700l3.700-3.600 2.300 5.500 2.300-1-2.300-5.300h5z" fill="#fff" stroke="#000" />
      </svg>
    `;
  }
}

declare global {
  interface HTMLElementTagNameMap {
    'app-root': AppRoot;
    'browser-window': BrowserWindow;
    'explorer-window': ExplorerWindow;
    'task-bar': TaskBar;
  }
}
